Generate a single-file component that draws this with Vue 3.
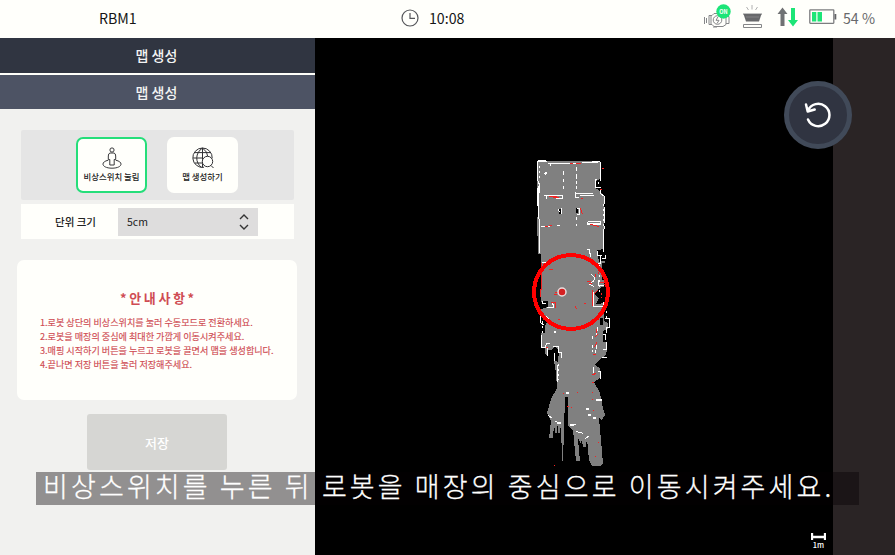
<script setup>
const notices = [
  '1.로봇 상단의 비상스위치를 눌러 수동모드로 전환하세요.',
  '2.로봇을 매장의 중심에 최대한 가깝게 이동시켜주세요.',
  '3.매핑 시작하기 버튼을 누르고 로봇을 끌면서 맵을 생성합니다.',
  '4.끝나면 저장 버튼을 눌러 저장해주세요.',
]
</script>

<template>
  <div class="screen">
    <header class="topbar">
      <span class="robot">RBM1</span>
      <div class="clock">
        <svg width="18" height="18" viewBox="0 0 18 18" fill="none" stroke="#55565a" stroke-width="1.2">
          <circle cx="9" cy="9" r="8" /><path d="M9 4v5.4h5" />
        </svg>
        <span>10:08</span>
      </div>
      <div class="status">
        <svg width="142" height="30" viewBox="700 0 142 30">
          <g fill="none" stroke="#858688" stroke-width="1">
            <path d="M704.5 17v7M706.5 18v5M709 15.500h3l2-2h9l3 2v9l-3 2h-9l-2-2h-3zM726 16.500h3v7h-3M711 15.500v9M713 27h4" />
            <circle cx="717.500" cy="20" r="4.300" />
            <path d="M718 16.800l-2 3.500h3l-2 3.200" />
            <path d="M752 5v4.500M746.500 7l2 3M757.500 7l-2 3" stroke="#b0b0b0" />
            <path d="M743.500 27.500v-3h18v3zM743 14h19" />
          </g>
          <path d="M743.500 14h18l-2.500 7.500h-13z" fill="#68696b" />
          <path d="M746 17h13" stroke="#999" stroke-width=".6" />
          <circle cx="723.500" cy="11.500" r="7.200" fill="#1ce577" />
          <text x="723.500" y="14" class="on" text-anchor="middle">ON</text>
          <path d="M782.500 7.500l5 6.500h-3v12h-4v-12h-3z" fill="#707173" />
          <path d="M793 26.500l-5-6.500h3v-12h4v12h3z" fill="#1ce577" />
          <rect x="809.800" y="9.800" width="24" height="13.500" rx=".5" fill="none" stroke="#7c7d7f" stroke-width="1.300" />
          <path d="M834.500 14h1.800v5.500h-1.800z" fill="#626365" />
          <path d="M812 12h4.300v9.500H812zM817.500 12h4.500v9.500h-4.500z" fill="#1ce577" />
        </svg>
        <span class="percent">54 %</span>
      </div>
    </header>

    <div class="body">
      <aside class="sidebar">
        <div class="title dark">맵 생성</div>
        <div class="title light">맵 생성</div>
        <section class="modes">
          <button class="mode active">
            <svg width="22" height="22" viewBox="0 0 22 22" fill="none" stroke="#39393b" stroke-width="1">
              <circle cx="11" cy="3" r="2.100" />
              <path d="M9 6h4q1.700.4 1.700 3v3.500h-1.500V18H8.800v-5.500H7.300V9Q7.300 6.400 9 6z" />
              <path d="M7.300 13.200C-1.200 15 .8 21.200 11 21.200s12.200-6.200 3.700-8" />
            </svg>
            <span>비상스위치 눌림</span>
          </button>
          <button class="mode">
            <svg width="22" height="22" viewBox="0 0 22 22" fill="none" stroke="#303033" stroke-width="1">
              <path d="M12 20.300a9.700 9.700 0 1 1 8.200-9M10.500 1v19.500M10.500 1C3 6 3 15.500 9.500 20.400M10.500 1q5.400 4 5.200 8.500M2.500 5.600h16M1 11h10M2.500 16h8" />
              <circle cx="15.500" cy="14.500" r="5.200" fill="#fffffb" /><path d="M19 18.500l2.500 2.500" />
            </svg>
            <span>맵 생성하기</span>
          </button>
        </section>
        <section class="unit">
          <label>단위 크기</label>
          <div class="select">
            <span>5cm</span>
            <svg width="10" height="16" viewBox="0 0 10 16" fill="none" stroke="#343434" stroke-width="1.400"><path d="M1 5l4-4 4 4M1 11l4 4 4-4" /></svg>
          </div>
        </section>
        <section class="notice">
          <h2>* 안 내 사 항 *</h2>
          <p v-for="(line, i) in notices" :key="i">{{ line }}</p>
        </section>
        <button class="save">저장</button>
      </aside>

      <main class="map">
        <svg width="518" height="517" viewBox="315 38 518 517" shape-rendering="crispEdges">
          <path fill="#808080" d="M537 161H600V179L596 181V188L601 192L604 196V249L597 250L599 262L602 263V280H604V321L608 323V329L603 331V342L607 342V350L606 355L600 359L595 365L600 368V378L594 382L600 393L603 408L605 415L602 420L599 418L603 463L600 466H592L589 460L587 438L586 447L583 447L582 440L580 444L579 438L578 440L580 461H576L573 430L568 426V397H565L563 461H562L561 423L560 433H558L558 423L556 436L554 425L553 438L549 438L551 421L547 413L551 399L557 388L556 373L552 350H548L547 356L545 354V347H541V333H545V325H540V315L541 300V254H538L537 217H539V193H537Z" />
          <path fill="#000" d="M539 302l3 0 2-1 4 0v6l-7 2h-3zM541 313l7 4-2 8h-6zM551 350l4-3 4 3-1 12-6-2zM596 291l6-4 4 1v15l-10 1 3-6-4-3zM600 318h3v7h-3zM559 209h2v5h-2zM576 208h2v5h-2zM596 181h4v8h-4zM600 255h5v5h-5z" />
          <path fill="#808080" d="M601 261h4v2h-4z" />
          <g fill="none" stroke="#fff" stroke-width="1" transform="translate(.5 .5)">
            <path d="M537 161h9M537 160v20M538 180v3h1v9h-1v26M539 218v34M547 163h31M550 162v3M581 162h16M591 161h8M600 161v19M596 179h-1v8h5M598 181v2M600 189v4l4 3v7M604 206v16M604 225v3M603 229v22M586 249h3l1 8M597 250v5h4M543 195h19v3h-7M546 195v3M575 193h17M575 191v6h3M579 195h14M576 208h3v6h-3M587 221h13v3h-13v-3M587 223h13M540 226h9M556 225h3" />
            <path d="M563 170v4M563 178v3M563 185v3M576 166v4M576 173v5M576 180v3M576 185v3M561 207v6M576 216v3M576 223v2M543 173h3v-2M591 274l3 3-1 5M593 263h7v-9M598 279v6h5M592 281l-3 3 5 2M593 291v15h10v-5M605 254v4h-4M541 262h6M542 300v3h3M553 304v3h-7M540 313v9l4 3M541 334v13h4l1-4h3M547 347v8M552 346h6v6h3v5M554 352v8M557 364v17M544 315l5 4M604 318h5v9h-3v5M602 334h3v5M606 341v8h-4M601 357h5M593 366v6M597 371h3v7M548 415l4 3M555 421l6 2M569 424h6M576 431l7 2M589 435l-4 3" />
            <path d="M545 171v3M558 209l2 5M552 303l2 4M592 335v4M592 344v7M597 327l-1 9M596 345l-1 9" stroke-dasharray="3 2" />
            <path d="M539 165v13M603 203v38M599 264v29M606 290v30M558 363v16M542 320v13M538 185v28" stroke-dasharray="2 3" />
            <path d="M595 399h6M565 392h3M585 408h3M556 422h4M569 424h4M537 160h8M592 417h3M553 331h2M587 414h3M537 187v18" stroke-width="2" />
          </g>
          <g fill="none" stroke="#f52222" stroke-width="1" transform="translate(.5 .5)">
            <path d="M569 163h3M575 163h5M601 168h2M548 196h8M552 197h6M580 198h2M599 189h2M580 208l2 6M544 226h3M548 225h3M590 224l9 2M541 262v27M548 269h4M540 288v8M550 302h5v5M554 292h3M553 294h3M575 306l1 3M583 303h2M586 281h4M588 283h3M592 289v16M597 290l-4 4M595 273v3M599 282h5M557 319h2M552 322h1M545 347h2M594 347l2-5M592 354h3M594 337l3-3M591 374h3M593 373h2M591 382h2M562 393h1M576 392h1M591 392h1M591 399h1M566 406h2M570 407h1M592 410h1M597 442h1M594 456h1M553 465h1M596 328v4" />
            <path d="M598 263v10M604 279v5M601 292v5" stroke-dasharray="2 2" />
          </g>
          <circle cx="571" cy="292" r="37" fill="none" stroke="#f00" stroke-width="4" />
          <circle cx="562" cy="292" r="4" fill="#d52022" stroke="#e8dede" stroke-width="1.500" shape-rendering="auto" />
        </svg>
        <div class="scale">
          <svg width="15" height="8" viewBox="0 0 15 8"><path d="M1 0v7M14 0v7M1 4h13" fill="none" stroke="#fff" stroke-width="2.300" /></svg>
          <span>1m</span>
        </div>
      </main>
      <div class="rail"></div>
    </div>
    <button class="reset">
      <svg width="30" height="30" viewBox="0 0 30 30" fill="none" stroke="#fff" stroke-width="2.500" stroke-linecap="round" stroke-linejoin="round">
        <path d="M5 19.500A11.200 11.200 0 1 0 5 10.500M3 4.500l1.700 7 7-2" />
      </svg>
    </button>
    <div class="caption"><span>비상스위치를 누른 뒤 로봇을 매장의 중심으로 이동시켜주세요.</span></div>
  </div>
</template>

<style>
body { margin: 0; overflow: hidden; }
</style>

<style scoped>
* { box-sizing: border-box; }
.screen { position: relative; width: 895px; height: 555px; overflow: hidden; font-family: "Noto Sans CJK KR", "Noto Sans", sans-serif; color: #222; }
button { font: inherit; border: 0; padding: 0; }
svg { display: block; flex: none; }
.topbar { height: 38px; display: grid; grid-template-columns: 401px 299px 195px; align-items: center; background: #fffffb; font-size: 14.2px; line-height: 36px; }
.robot { padding-left: 99px; color: #151515; }
.clock { display: flex; align-items: center; gap: 10px; color: #151515; height: 36px; align-self: start; }
.robot, .status { align-self: start; height: 36px; }
.status { display: flex; gap: 1px; }
.percent { color: #69696b; }
.on { font-size: 5.5px; font-weight: 700; fill: #fff; }
.body { display: flex; height: 517px; }
.sidebar { width: 315px; background: #f1f1ef; display: flex; flex-direction: column; }
.title { height: 34px; line-height: 35px; text-align: center; color: #f3f3f3; font-size: 14px; font-weight: 500; padding-right: 2px; }
.dark { height: 35px; background: #303541; }
.light { margin-top: 2px; background: #4d5364; }
.dark + .light { box-shadow: 0 -2px #fffffa; }
.modes { margin: 21px 0 0 21px; width: 273px; height: 70px; padding: 7px 0 0 55px; background: #e5e5e5; display: flex; gap: 20px; border-radius: 2px; }
.mode { width: 71px; height: 56px; border-radius: 7px; background: #fffffb; display: flex; flex-direction: column; align-items: center; padding-top: 10px; color: #222; }
.mode span { font-size: 8.4px; line-height: 12px; font-weight: 500; margin-top: 1px; white-space: nowrap; }
.active { border: 2px solid #25de7a; padding-top: 8px; }
.unit { margin: 4px 0 0 21px; width: 273px; height: 35px; background: #fffffb; display: flex; align-items: center; }
.unit label { width: 97px; padding-left: 34px; font-size: 10.5px; font-weight: 500; }
.select { width: 140px; height: 28px; background: #dedddd; display: flex; align-items: center; justify-content: space-between; padding: 0 9px; font-size: 10.5px; }
.notice { margin: 21px 0 0 17px; width: 280px; height: 140px; border-radius: 7px; padding: 28px 0 0 23px; background: #fffffb; color: #cf4c53; }
.notice h2 { margin: 0 23px 7px 0; text-align: center; font-size: 13px; line-height: 20px; font-weight: 700; letter-spacing: -.15px; }
.notice p { margin: 0; font-size: 9.1px; line-height: 14px; white-space: nowrap; -webkit-text-stroke: .15px currentColor; }
.save { width: 140px; height: 56px; margin: 14px 0 0 87px; border-radius: 3px; background: #d6d6d3; color: #fff; font-size: 13px; font-weight: 500; }
.map { width: 518px; position: relative; background: #000; }
.rail { flex: 1; background: #2a2425; }
.scale { position: absolute; right: 7px; bottom: 7px; display: flex; flex-direction: column; align-items: center; color: #fff; font-size: 7.5px; font-weight: 500; line-height: 7px; }
.reset { position: absolute; left: 784px; top: 81px; width: 68px; height: 68px; border-radius: 50%; background: #303441; border: 5px solid #414a59; display: flex; align-items: center; justify-content: center; }
.caption { position: absolute; left: 36px; top: 472px; width: 823px; height: 33px; background: rgba(4, 0, 2, .4); color: #fff; font-size: 27px; line-height: 28px; font-weight: 300; white-space: nowrap; padding-left: 7px; letter-spacing: 3.12px; -webkit-text-stroke: .3px #fff; }
</style>
